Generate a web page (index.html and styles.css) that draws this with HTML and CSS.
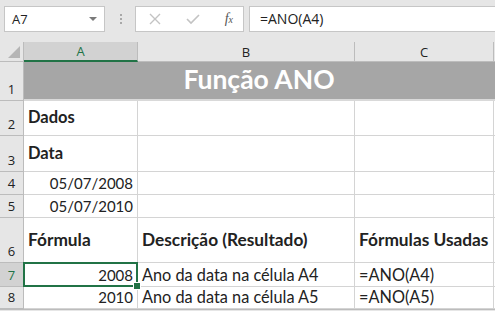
FILE: index.html
```html
<!DOCTYPE html>
<html lang="pt">
<head>
    <meta charset="UTF-8">
    <title>Função ANO</title>
    <link rel="stylesheet" href="styles.css">
</head>
<body>

    <div class="formula-bar">
        <div class="name-box">
            <span>A7</span>
            <span class="drop"></span>
        </div>
        <div class="dots">
            <i></i><i></i><i></i>
        </div>
        <div class="buttons">
            <svg width="14" height="14" viewBox="0 0 14 14"><path d="M2 2L12 12M12 2L2 12" stroke="#c3c3c3" stroke-width="1.4" fill="none"/></svg>
            <svg width="16" height="14" viewBox="0 0 16 14"><path d="M2 7L6 11L14 3" stroke="#c3c3c3" stroke-width="1.6" fill="none"/></svg>
            <span class="fx">f<sub>x</sub></span>
        </div>
        <div class="formula-input">=ANO(A4)</div>
    </div>

    <div class="sheet">
        <div class="corner"></div>
        <div class="col-head selected">A</div>
        <div class="col-head">B</div>
        <div class="col-head">C</div>
        <div class="col-head last"></div>

        <div class="row-head r1">1</div>
        <div class="title">Função ANO</div>
        <div class="cell fill-grey last"></div>

        <div class="row-head r2">2</div>
        <div class="cell bold">Dados</div>
        <div class="cell"></div>
        <div class="cell"></div>
        <div class="cell last"></div>

        <div class="row-head r3">3</div>
        <div class="cell bold">Data</div>
        <div class="cell"></div>
        <div class="cell"></div>
        <div class="cell last"></div>

        <div class="row-head r4">4</div>
        <div class="cell num">05/07/2008</div>
        <div class="cell"></div>
        <div class="cell"></div>
        <div class="cell last"></div>

        <div class="row-head r5">5</div>
        <div class="cell num">05/07/2010</div>
        <div class="cell"></div>
        <div class="cell"></div>
        <div class="cell last"></div>

        <div class="row-head r6">6</div>
        <div class="cell bold head">Fórmula</div>
        <div class="cell bold head">Descrição (Resultado)</div>
        <div class="cell bold head">Fórmulas Usadas</div>
        <div class="cell last"></div>

        <div class="row-head r7 selected">7</div>
        <div class="cell num active">2008</div>
        <div class="cell">Ano da data na célula A4</div>
        <div class="cell">=ANO(A4)</div>
        <div class="cell last"></div>

        <div class="row-head r8">8</div>
        <div class="cell num">2010</div>
        <div class="cell">Ano da data na célula A5</div>
        <div class="cell">=ANO(A5)</div>
        <div class="cell last"></div>
    </div>

</body>
</html>
```

FILE: styles.css
```css
* {
    box-sizing: border-box;
}

body {
    margin: 0;
    background-color: #e6e6e6;
    font-family: Lato, "Open Sans", sans-serif;
    overflow: hidden;
}

.formula-bar {
    display: flex;
    align-items: center;
    height: 42px;
    padding: 0 0 4px 4px;
    background-color: #e6e6e6;
}

.name-box {
    display: flex;
    align-items: center;
    justify-content: space-between;
    width: 101px;
    height: 26px;
    padding: 0 7px 0 7px;
    background-color: #fff;
    border: 1px solid #c6c6c6;
    font-family: "Open Sans", sans-serif;
    font-size: 13px;
    color: #222;
}

.drop {
    width: 0;
    height: 0;
    border-left: 4px solid transparent;
    border-right: 4px solid transparent;
    border-top: 4px solid #7a7a7a;
}

.dots {
    display: flex;
    flex-direction: column;
    gap: 2px;
    margin: 0 13px 0 15px;
}

.dots i {
    width: 2px;
    height: 2px;
    background-color: #a8a8a8;
}

.buttons {
    display: flex;
    align-items: center;
    justify-content: space-between;
    width: 109px;
    height: 26px;
    padding: 0 10px 0 12px;
    background-color: #fff;
    border: 1px solid #c6c6c6;
}

.fx {
    font-family: "Liberation Serif", serif;
    font-style: italic;
    font-size: 14px;
    color: #555;
}

.fx sub {
    font-size: 10px;
    vertical-align: 0;
}

.formula-input {
    flex: 1;
    height: 26px;
    margin-left: 5px;
    padding: 2px 0 0 10px;
    background-color: #fff;
    border: 1px solid #c6c6c6;
    border-right: none;
    font-family: "Open Sans", sans-serif;
    font-size: 14px;
    color: #222;
}

.sheet {
    display: grid;
    grid-template-columns: 24px 114px 217px 139px 1fr;
    grid-template-rows: 20px 39px 35px 36px 23px 23px 45px 24px 22px;
    background-color: #fff;
    border-bottom: 1px solid #bcbcbc;
    width: 495px;
}

.corner {
    position: relative;
    background-color: #e6e6e6;
    border-right: 1px solid #bcbcbc;
    border-bottom: 1px solid #bcbcbc;
}

.corner::after {
    content: "";
    position: absolute;
    right: 3px;
    bottom: 3px;
    width: 0;
    height: 0;
    border-left: 12px solid transparent;
    border-bottom: 12px solid #b5b5b5;
}

.col-head {
    display: flex;
    align-items: center;
    justify-content: center;
    background-color: #e6e6e6;
    border-right: 1px solid #bcbcbc;
    border-bottom: 1px solid #bcbcbc;
    font-family: "Open Sans", sans-serif;
    font-size: 13px;
    color: #222;
}

.col-head.selected {
    background-color: #d2d2d2;
    color: #217346;
    border-bottom: 2px solid #217346;
}

.col-head.last {
    border-right: none;
}

.row-head {
    display: flex;
    align-items: flex-end;
    justify-content: center;
    padding-bottom: 2px;
    background-color: #e6e6e6;
    border-right: 1px solid #bcbcbc;
    border-bottom: 1px solid #bcbcbc;
    font-family: "Open Sans", sans-serif;
    font-size: 13px;
    color: #222;
}

.row-head.selected {
    background-color: #d2d2d2;
    color: #217346;
}

.title {
    grid-column: 2 / 5;
    display: flex;
    align-items: flex-end;
    justify-content: center;
    padding-bottom: 4px;
    background-color: #a6a6a6;
    border-bottom: 2px solid #d9d9d9;
    font-size: 26.5px;
    font-weight: bold;
    color: #fff;
}

.cell {
    position: relative;
    display: flex;
    align-items: flex-end;
    padding: 0 4px 2px 4px;
    border-right: 1px solid #d4d4d4;
    border-bottom: 1px solid #d4d4d4;
    font-size: 16.3px;
    color: #222;
    white-space: nowrap;
}

.cell.fill-grey {
    background-color: #a6a6a6;
    border-bottom: 2px solid #d9d9d9;
}

.cell.bold {
    font-weight: bold;
    font-size: 16.5px;
    padding-bottom: 8px;
}

.cell.bold.head {
    font-size: 17.3px;
    padding-bottom: 12px;
}

.cell.num {
    justify-content: flex-end;
    font-size: 15px;
}

.cell.active::after {
    content: "";
    position: absolute;
    left: -1px;
    top: -1px;
    right: -1px;
    bottom: -1px;
    border: 2px solid #217346;
}

.cell.active::before {
    content: "";
    position: absolute;
    right: -4px;
    bottom: -4px;
    width: 6px;
    height: 6px;
    background-color: #217346;
    border: 1px solid #fff;
    z-index: 1;
}
```
